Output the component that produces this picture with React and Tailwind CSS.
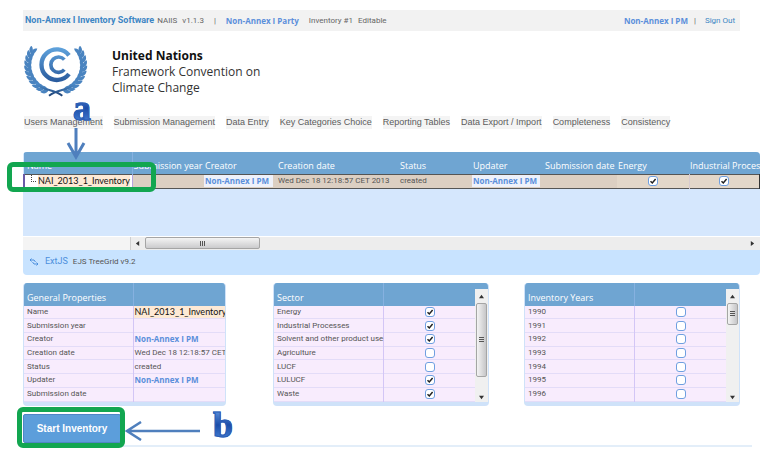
import React from "react";

const navItems = [
  "Users Management",
  "Submission Management",
  "Data Entry",
  "Key Categories Choice",
  "Reporting Tables",
  "Data Export / Import",
  "Completeness",
  "Consistency",
];

const gridColumns = [
  "Submission year",
  "Creator",
  "Creation date",
  "Status",
  "Updater",
  "Submission date",
  "Energy",
  "Industrial Processes",
];

const sectors = [
  ["Energy", true],
  ["Industrial Processes", true],
  ["Solvent and other product use", true],
  ["Agriculture", false],
  ["LUCF", false],
  ["LULUCF", true],
  ["Waste", true],
];

const years = ["1990", "1991", "1992", "1993", "1994", "1995", "1996"].map((y) => [y, false]);

const sans = "font-['Roboto',sans-serif]";
const humanist = "font-['Open_Sans',sans-serif]";

function Leaves() {
  const leaves = [];
  for (let k = 0; k < 11; k++) {
    const deg = 106 + k * 10;
    const a = (deg * Math.PI) / 180;
    const x = 119 + 82 * Math.cos(a);
    const y = 74 + 80 * Math.sin(a);
    [-24, 24].forEach((tilt) => {
      leaves.push(
        <path
          key={`${k}${tilt}`}
          d="M0 0C6 -8 17 -7 24 0C17 6 6 7 0 0Z"
          transform={`translate(${x.toFixed(1)} ${y.toFixed(1)}) rotate(${deg + 90 + tilt})`}
        />
      );
    });
  }
  return <g>{leaves}</g>;
}

function Logo() {
  return (
    <svg viewBox="21 16 198 156" className="h-[52px] w-[66px] shrink-0" role="img" aria-label="UNFCCC emblem">
      <defs>
        <linearGradient id="emblem" gradientUnits="userSpaceOnUse" x1="0" y1="16" x2="0" y2="125">
          <stop offset="0" stopColor="#62a6df" />
          <stop offset="1" stopColor="#28599c" />
        </linearGradient>
        <linearGradient id="wreathRing" x1="0" y1="0" x2="0" y2="1">
          <stop offset="0" stopColor="#4f8fce" />
          <stop offset="1" stopColor="#1f4478" />
        </linearGradient>
      </defs>
      <g fill="#4a84c0">
        <Leaves />
        <g transform="translate(238 0) scale(-1 1)">
          <Leaves />
        </g>
      </g>
      <g fill="none">
        <path
          d="M60 128C82 151 112 144 139 165M178 128C156 151 126 144 99 165"
          stroke="url(#wreathRing)"
          strokeWidth="6"
        />
        <path d="M159 44A46 46 0 1 0 159 100" stroke="url(#emblem)" strokeWidth="13" />
        <path d="M145 57A23 23 0 1 0 145 87" stroke="url(#emblem)" strokeWidth="11" />
      </g>
    </svg>
  );
}

function Check({ label, checked }) {
  return (
    <span className="inline-grid size-[10px] align-middle">
      <input
        type="checkbox"
        aria-label={label}
        defaultChecked={checked}
        className="peer col-start-1 row-start-1 size-[10px] appearance-none rounded-[3px] border border-[#6f9fe0] bg-white"
      />
      <svg
        viewBox="0 0 10 10"
        className="pointer-events-none invisible col-start-1 row-start-1 size-[10px] peer-checked:visible"
      >
        <path d="M2.5 5.2L4.3 7L7.6 3" fill="none" stroke="#222" strokeWidth="1.5" />
      </svg>
    </span>
  );
}

function Arrow({ className, d }) {
  return (
    <svg viewBox="0 0 6 6" className={`size-[5px] shrink-0 fill-[#333] ${className || ""}`}>
      <path d={d} />
    </svg>
  );
}

function VerticalScroll({ thumb }) {
  return (
    <div className="absolute top-[6px] right-0 bottom-[-3px] flex w-[13px] flex-col items-center bg-[#f0f0f0] py-[5px]">
      <Arrow d="M0 5L3 1L6 5Z" />
      <div
        className={`mt-[4px] flex w-[11px] flex-col items-center justify-center gap-px rounded-[2px] border border-[#a5a5a5] bg-linear-to-r from-[#f4f4f4] to-[#c6c6c8] ${thumb}`}
      >
        <i className="h-px w-[5px] bg-[#555]" />
        <i className="h-px w-[5px] bg-[#555]" />
        <i className="h-px w-[5px] bg-[#555]" />
      </div>
      <Arrow className="mt-auto" d="M0 1L3 5L6 1Z" />
    </div>
  );
}

function Panel({ title, width, rows, thumb }) {
  return (
    <section
      className={`relative overflow-hidden rounded-[4px] border-x border-b-4 border-[#cfe2f9] bg-[#cfe2f9] ${width}`}
    >
      <table className="h-[119px] w-full table-fixed border-collapse">
        <colgroup>
          <col className="w-[109px]" />
          <col />
          {thumb && <col className="w-[12px]" />}
        </colgroup>
        <thead>
          <tr className={`h-[23px] bg-[#6fa5d2] text-left text-[9px] leading-[14px] text-white ${humanist}`}>
            <th className="p-0 pt-[7px] pl-[3px] font-normal whitespace-nowrap">{title}</th>
            <th className="border-l border-[#86b1e0] p-0" aria-label="Value" />
            {thumb && <td />}
          </tr>
        </thead>
        <tbody className={`bg-[#f8ecfd] text-[8px] leading-[12px] text-[#555] ${sans}`}>
          {rows.map(([label, value, kind]) => (
            <tr key={label} className="border-b border-[#e3dcf8]">
              <th scope="row" className="p-0 pl-[3px] text-left font-normal whitespace-nowrap">
                {label}
              </th>
              <td
                className={`overflow-hidden border-l border-[#d3c6f6] p-0 whitespace-nowrap ${
                  typeof value === "boolean" ? "text-center leading-none" : "pl-px"
                } ${kind === "name" ? "bg-[#fde9d5] font-['Lato',sans-serif] text-[9px] text-[#111]" : ""} ${
                  kind === "link" ? "font-['Open_Sans',sans-serif] font-bold text-[#5b8fdb]" : ""
                }`}
              >
                {typeof value === "boolean" ? (
                  <Check label={label} checked={value} />
                ) : kind === "link" ? (
                  <a href="#user">{value}</a>
                ) : (
                  value
                )}
              </td>
              {thumb && <td className="p-0" />}
            </tr>
          ))}
        </tbody>
      </table>
      {thumb && <VerticalScroll thumb={thumb} />}
    </section>
  );
}

function Letter({ children, className }) {
  return (
    <span
      className={`absolute bg-linear-to-b from-[#6da0e8] via-[#1c4da8] to-[#4f8ade] bg-clip-text font-['Liberation_Serif',serif] text-[36px] leading-[36px] font-bold text-transparent [-webkit-text-stroke:1px_#2a5db5] ${className}`}
    >
      {children}
    </span>
  );
}

export default function App() {
  return (
    <div className={`min-h-screen overflow-hidden bg-white pt-[10px] pr-[7px] pl-[23px] ${sans}`}>
      <header className="mr-[20px] flex h-[21px] items-center bg-[#f2f2f2] pr-[5px] pl-[2px] text-[8px] whitespace-nowrap text-[#666]">
        <strong className="text-[9px] text-[#3d86c4]">Non-Annex I Inventory Software</strong>
        <span className="ml-[3px]">NAIIS</span>
        <span className="ml-[5px]">v1.1.3</span>
        <span className="ml-[10px]">|</span>
        <a href="#party" className={`ml-[10px] font-bold text-[#5b8fdb] ${humanist}`}>
          Non-Annex I Party
        </a>
        <span className="ml-[10px]">Inventory #1</span>
        <span className="ml-[5px]">Editable</span>
        <a href="#user" className={`ml-auto font-bold text-[#5b8fdb] ${humanist}`}>
          Non-Annex I PM
        </a>
        <span className="ml-[6px]">|</span>
        <a href="#signout" className="ml-[9px] text-[#3d86c4]">
          Sign Out
        </a>
      </header>

      <div className="mt-[15px] flex items-start gap-[23px]">
        <Logo />
        <h1 className={`pt-[2px] text-[12px] leading-[16px] text-[#333] ${humanist}`}>
          <b className="text-[#111]">United Nations</b>
          <br />
          Framework Convention on
          <br />
          Climate Change
        </h1>
      </div>

      <div className="relative mt-[18px]">
        <nav className="flex h-[13px] items-center gap-[11px] pl-px font-['Liberation_Sans',sans-serif] text-[9px] leading-[13px] whitespace-nowrap text-[#5c5c5c]">
          {navItems.map((item) => (
            <a key={item} href="#menu" className="bg-[#f4f4f4]">
              {item}
            </a>
          ))}
        </nav>
        <Letter className="top-[-26px] left-[50px]">a</Letter>
        <svg viewBox="0 0 20 32" className="absolute top-[12px] left-[43px] z-10 h-[32px] w-[20px]">
          <path d="M10 0V29M2 15L10 29L18 15" fill="none" stroke="#4f7fbd" strokeWidth="3" />
        </svg>
      </div>

      <section className="relative mt-[23px]">
        <div className="overflow-hidden rounded-[4px] bg-[#c8e3ff]">
          <table className="w-full table-fixed border-collapse bg-[#d5e7fd]">
            <colgroup>
              <col className="w-[108px]" />
              <col className="w-[72px]" />
              <col className="w-[73px]" />
              <col className="w-[122px]" />
              <col className="w-[73px]" />
              <col className="w-[72px]" />
              <col className="w-[73px]" />
              <col className="w-[72px]" />
              <col />
            </colgroup>
            <thead>
              <tr className={`h-[22px] bg-[#6fa5d2] text-left text-[9px] leading-[14px] text-white ${humanist}`}>
                <th className="border-r border-[#86b1e0] p-0 pt-[7px] pl-[3px] font-normal">Name</th>
                {gridColumns.map((c) => (
                  <th key={c} className="overflow-hidden p-0 pt-[7px] pl-px font-normal whitespace-nowrap">
                    {c}
                  </th>
                ))}
              </tr>
            </thead>
            <tbody>
              <tr className="h-[14px] border-y border-[#555] bg-[#dccfc2] text-[8px] leading-[12px] whitespace-nowrap text-[#555]">
                <td className="border-l-2 border-[#6a5aa8] bg-white p-0">
                  <div className="flex items-center">
                    <i className="mb-[5px] ml-[6px] h-[7px] w-[5px] shrink-0 border-b border-l border-dotted border-[#444]" />
                    <span className="ml-[2px] bg-[#fde9d5] font-['Lato',sans-serif] text-[9px] text-[#111]">
                      NAI_2013_1_Inventory
                    </span>
                  </div>
                </td>
                <td className="border-l border-[#b7a5e0] p-0" />
                <td className="p-0">
                  <a href="#user" className={`mr-[4px] block bg-[#eef1fa] pl-px font-bold text-[#5b8fdb] ${humanist}`}>
                    Non-Annex I PM
                  </a>
                </td>
                <td className="p-0 pl-px">Wed Dec 18 12:18:57 CET 2013</td>
                <td className="p-0 pl-px">created</td>
                <td className="p-0">
                  <a href="#user" className={`mr-[4px] block bg-[#eef1fa] pl-px font-bold text-[#5b8fdb] ${humanist}`}>
                    Non-Annex I PM
                  </a>
                </td>
                <td className="p-0" />
                <td className="bg-[#e3d7c9] p-0 text-center leading-none">
                  <Check label="Energy included" checked />
                </td>
                <td className="border-r border-l border-r-[#333] border-l-[#d8cbd0] bg-[#e3d7c9] p-0 text-center leading-none">
                  <Check label="Industrial Processes included" checked />
                </td>
              </tr>
            </tbody>
          </table>
          <div className="h-[48px] border-b border-white bg-[#d5e7fd]" />
          <div className="flex h-[13px]">
            <div className="w-[108px] border-r border-[#d0d0d0] bg-[#f4f4f4]" />
            <div className="flex flex-1 items-center bg-[#ededed] pr-[5px] pl-[4px]">
              <Arrow d="M5 0L1 3L5 6Z" />
              <div className="ml-[5px] flex h-[12px] w-[115px] items-center justify-center gap-px rounded-[2px] border border-[#a5a5a5] bg-linear-to-b from-[#f4f4f4] to-[#cbcbcd]">
                <i className="h-[5px] w-px bg-[#555]" />
                <i className="h-[5px] w-px bg-[#555]" />
                <i className="h-[5px] w-px bg-[#555]" />
              </div>
              <Arrow className="ml-auto" d="M1 0L5 3L1 6Z" />
            </div>
          </div>
          <footer className="flex h-[25px] items-center pl-[6px] text-[8px] text-[#555]">
            <svg viewBox="0 0 10 10" className="size-[10px]">
              <path d="M2.5 4.5L1 3L2.5 1.5M1 3H5L6.5 5M7.5 5.5L9 7L7.5 8.5M9 7H5L3.5 5" fill="none" stroke="#4d8fdd" />
            </svg>
            <a href="#extjs" className="ml-[6px] text-[9px] text-[#4d8fdd]">
              ExtJS
            </a>
            <span className="ml-[5px]">EJS TreeGrid v9.2</span>
          </footer>
        </div>
        <div className="pointer-events-none absolute top-[10px] left-[-16px] h-[30px] w-[149px] rounded-[6px] border-[5px] border-[#12a650]" />
      </section>

      <div className="mt-[8px] flex items-start">
        <Panel
          title="General Properties"
          width="w-[203px]"
          rows={[
            ["Name", "NAI_2013_1_Inventory", "name"],
            ["Submission year", ""],
            ["Creator", "Non-Annex I PM", "link"],
            ["Creation date", "Wed Dec 18 12:18:57 CET 2013"],
            ["Status", "created"],
            ["Updater", "Non-Annex I PM", "link"],
            ["Submission date", ""],
          ]}
        />
        <div className="ml-[47px] flex gap-[35px]">
          <Panel title="Sector" width="w-[216px]" rows={sectors} thumb="h-[74px]" />
          <Panel title="Inventory Years" width="w-[216px]" rows={years} thumb="h-[22px]" />
        </div>
      </div>

      <div className="relative mt-[8px] mr-[8px] border-b-2 border-[#e3eef9] pb-[2px]">
        <button
          type="button"
          className="block h-[29px] w-[98px] rounded-[2px] border border-[#4f86c6] bg-[#5c9edb] font-['Liberation_Sans',sans-serif] text-[10px] font-bold text-white"
        >
          Start Inventory
        </button>
        <div className="pointer-events-none absolute top-[-7px] left-[-6px] h-[41px] w-[108px] rounded-[6px] border-[5px] border-[#12a650]" />
        <svg viewBox="0 0 76 20" className="absolute top-[7px] left-[102px] h-[20px] w-[76px]">
          <path d="M75 10H2M16 1L2 10L16 19" fill="none" stroke="#4f7fbd" strokeWidth="2.5" />
        </svg>
        <Letter className="top-[-7px] left-[190px]">b</Letter>
      </div>
    </div>
  );
}
